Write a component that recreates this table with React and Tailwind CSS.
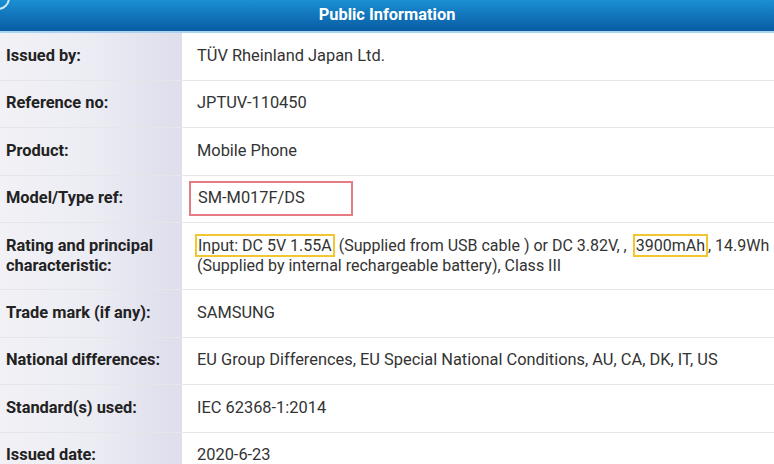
const ROWS = [
  { label: 'Issued by:', value: 'TÜV Rheinland Japan Ltd.' },
  { label: 'Reference no:', value: 'JPTUV-110450' },
  { label: 'Product:', value: 'Mobile Phone' },
  { label: 'Model/Type ref:', value: 'model' },
  { label: 'rating', value: 'rating' },
  { label: 'Trade mark (if any):', value: 'SAMSUNG' },
  { label: 'National differences:', value: 'EU Group Differences, EU Special National Conditions, AU, CA, DK, IT, US' },
  { label: 'Standard(s) used:', value: 'IEC 62368-1:2014' },
  { label: 'Issued date:', value: '2020-6-23' },
];

function Value({ value }) {
  if (value === 'model') {
    return (
      <span className="-ml-[8px] inline-block border-2 border-[#e57c84] py-[3px] pl-[7px] pr-[46px]">
        SM-M017F/DS
      </span>
    );
  }
  if (value === 'rating') {
    return (
      <p className="text-[16px] leading-[20px] whitespace-nowrap">
        <span className="-ml-[2px] border-2 border-[#f2c631] px-[1px]">Input: DC 5V 1.55A</span> (Supplied from USB
        cable ) or DC 3.82V, , <span className="ml-[2px] border-2 border-[#f2c631] px-[1px]">3900mAh</span>, 14.9Wh
        <br />
        (Supplied by internal rechargeable battery), Class III
      </p>
    );
  }
  return <span>{value}</span>;
}

export default function App() {
  return (
    <div className="h-[464px] w-[774px] overflow-hidden bg-white font-['Roboto','Liberation_Sans',sans-serif] text-[16.4px]">
      <div className="relative h-[33px] border-b-2 border-[#a9d3ef] bg-gradient-to-b from-[#1b8fd3] to-[#0a5ca3] text-center">
        <div className="absolute -left-[14px] -top-[14px] h-[24px] w-[24px] rounded-full border-2 border-white/80" />
        <span className="text-[16.4px] font-bold leading-[29px] text-white">Public Information</span>
      </div>
      {ROWS.map((row, i) => (
        <div
          key={i}
          className={`flex border-b border-[#e6e6ea] ${row.value === 'rating' ? 'h-[67px]' : 'h-[47.5px]'}`}
        >
          <div className="flex w-[182px] shrink-0 items-center bg-gradient-to-r from-[#f1f1f6] via-[#ececf4] to-[#dedeec] pl-[6px] font-bold text-[#222]">
            {row.label === 'rating' ? (
              <p className="leading-[20px]">
                Rating and principal
                <br />
                characteristic:
              </p>
            ) : (
              row.label
            )}
          </div>
          <div className="flex items-center pl-[15px] text-[#333]">
            <Value value={row.value} />
          </div>
        </div>
      ))}
    </div>
  );
}
